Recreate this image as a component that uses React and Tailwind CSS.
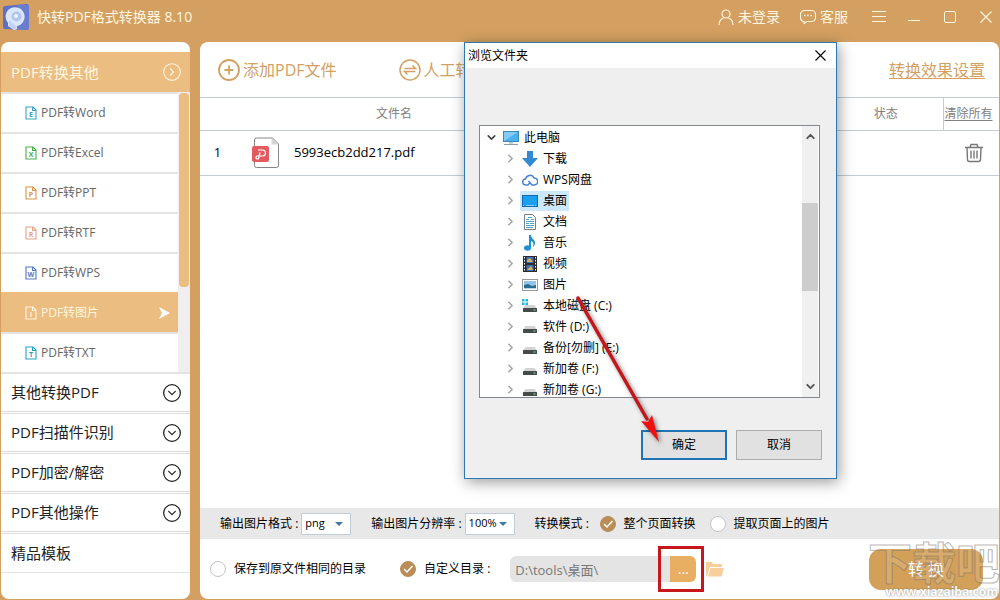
import { useState } from 'react'
import { ChevronDown, ChevronRight, ChevronUp, CircleChevronDown, CircleChevronRight } from 'lucide-react'

const formats = [
  { name: 'PDF转Word', letter: 'E', color: 'text-[#3aa3c4]' },
  { name: 'PDF转Excel', letter: 'X', color: 'text-[#44b04a]' },
  { name: 'PDF转PPT', letter: 'P', color: 'text-[#dc9443]' },
  { name: 'PDF转RTF', letter: 'R', color: 'text-[#e5a283]' },
  { name: 'PDF转WPS', letter: 'W', color: 'text-[#5478bd]' },
  { name: 'PDF转图片', letter: 'I', color: 'text-[#fff4dc]' },
  { name: 'PDF转TXT', letter: 'T', color: 'text-[#22a5c5]' }
]

const groups = ['其他转换PDF', 'PDF扫描件识别', 'PDF加密/解密', 'PDF其他操作']

const folders = [
  { name: '下载', icon: 'download' },
  { name: 'WPS网盘', icon: 'cloud' },
  { name: '桌面', icon: 'desktop' },
  { name: '文档', icon: 'doc' },
  { name: '音乐', icon: 'music' },
  { name: '视频', icon: 'video' },
  { name: '图片', icon: 'picture' },
  { name: '本地磁盘 (C:)', icon: 'system' },
  { name: '软件 (D:)', icon: 'disk' },
  { name: '备份[勿删] (E:)', icon: 'disk' },
  { name: '新加卷 (F:)', icon: 'disk' },
  { name: '新加卷 (G:)', icon: 'disk' }
]

const Logo = () => (
  <svg viewBox="0 0 28 28" className="size-7">
    <path d="M3 3 24 1a2.500 2.500 0 0 1 3 2v22a2 2 0 0 1-2 2L3 26a2 2 0 0 1-2-2V5a2 2 0 0 1 2-2z" fill="#5d6fc6" />
    <path d="M15 2h10a2 2 0 0 1 2 2v21a2 2 0 0 1-2 2H15z" fill="#7286d3" opacity=".6" />
    <path d="M6 20A9.500 9.500 0 1 1 15 23v3l-3 1-6-4z" fill="#dbe7f8" />
    <circle cx="14.500" cy="13.500" r="5" fill="#b3c5eb" />
    <circle cx="14" cy="13" r="2" fill="#eef4fd" />
    <path d="M7 17v6l7 4v-4z" fill="#c3d2f0" />
  </svg>
)

const FileIcon = ({ letter }) => (
  <svg viewBox="0 0 12 14" className="h-[14px] w-3" fill="none" stroke="currentColor" strokeWidth="1.100">
    <path d="M1 1h7l3 3v9H1zM7.500 1v3.500H11" />
    <text x="6" y="11.200" fontSize="7" textAnchor="middle" fill="currentColor" stroke="none" fontWeight="bold">{letter}</text>
  </svg>
)

const PdfIcon = () => (
  <svg viewBox="0 0 28 32" className="h-8 w-7" fill="none">
    <path d="M4.500 1h16l6 6v21.500a2 2 0 0 1-2 2h-20a2 2 0 0 1-2-2V3a2 2 0 0 1 2-2z" fill="#fff" stroke="#858585" />
    <path d="M19.500 1v6.500h7z" fill="#d6d6d6" />
    <rect x="0" y="9" width="17" height="16" rx="2" fill="#e25b60" />
    <path d="M6 13h4.500a3 3 0 0 1 0 6H5a1.500 1.500 0 1 0 1.500 2.500l1.500-6" stroke="#fff" strokeWidth="1.200" />
  </svg>
)

const TreeIcon = ({ kind }) => {
  if (kind === 'download') {
    return (
      <svg viewBox="0 0 16 16" className="size-4">
        <path d="M5 0h6v7h5l-8 9-8-9h5z" fill="#3489d3" />
      </svg>
    )
  }
  if (kind === 'cloud') {
    return (
      <svg viewBox="0 0 16 16" className="size-4" fill="none" stroke="#4b82d6" strokeWidth="1.500">
        <path d="M8 10.500 6 13H4a3 3 0 0 1-.5-6A4.500 4.500 0 0 1 12 6a3.500 3.500 0 0 1 .5 7H10L6.500 9" />
      </svg>
    )
  }
  if (kind === 'desktop') {
    return (
      <svg viewBox="0 0 16 16" className="size-4">
        <rect x="0.500" y="2.500" width="15" height="11" fill="#19a0f0" stroke="#1269ab" />
        <path d="M1 12.500h1M4 12.500h8M13 12.500h1" stroke="#8fd0fa" />
      </svg>
    )
  }
  if (kind === 'doc') {
    return (
      <svg viewBox="0 0 16 16" className="size-4">
        <path d="M2.500.5h8l3 3v12h-11z" fill="#fff" stroke="#7d7d7d" />
        <path d="M4 5.500h3M9 5.500h3M4 7.500h8M4 9.500h3M8 9.500h4M4 11.500h8M4 13.500h7M6 3.500h4" stroke="#4aa0c8" />
      </svg>
    )
  }
  if (kind === 'music') {
    return (
      <svg viewBox="0 0 16 16" className="size-4" fill="#1f92d4">
        <path d="M7 0h2c0 4 4 4 4 8 0 2-1 3-2 4 1-4 0-5-2-6v7H7z" />
        <ellipse cx="5.500" cy="13" rx="3.500" ry="2.800" />
      </svg>
    )
  }
  if (kind === 'video') {
    return (
      <svg viewBox="0 0 16 16" className="size-4">
        <rect x="1" y="0" width="14" height="16" fill="#2c2c2c" />
        <path d="M2.500 1v15M13.500 1v15" stroke="#fff" strokeDasharray="1.500 1.500" />
        <path d="M4.500 1h7v6h-7zM4.500 9h7v6h-7z" fill="#3f6fb8" />
        <path d="M5 4l3-2 3 4H5zM5 14l4-4 2 4z" fill="#d9b24e" />
      </svg>
    )
  }
  if (kind === 'picture') {
    return (
      <svg viewBox="0 0 16 16" className="size-4">
        <rect x="0.500" y="2.500" width="15" height="11" fill="#fff" stroke="#9a9a9a" />
        <path d="M2 4h12v8H2z" fill="#8fc6ea" />
        <path d="M2 8l4-1 4 2 4-1v4H2z" fill="#2b6c8f" />
        <path d="M2 11h12v1H2z" fill="#b9d8e6" />
      </svg>
    )
  }
  return (
    <svg viewBox="0 0 16 16" className="size-4">
      <path d="M3.500 7h9l2.500 3.500H1z" fill="#d3d3d3" />
      <rect x="1" y="10" width="14" height="4" rx="0.500" fill="#454b4b" />
      <rect x="11.500" y="11.500" width="2" height="1" fill="#7fe08c" />
      {kind === 'system' && <path d="M0 1h2.500v2.500H0zM3.500 1H6v2.500H3.500zM0 4.500h2.500V7H0zM3.500 4.500H6V7H3.500z" fill="#1db5dc" />}
    </svg>
  )
}

const ComputerIcon = () => (
  <svg viewBox="0 0 16 16" className="size-4">
    <rect x="0.500" y="1.500" width="15" height="10" fill="#49b1f0" stroke="#3d86b8" />
    <path d="M1 11 15 2H1z" fill="#83cbf5" />
    <path d="M6 12h4v2H6z" fill="#c4ccd2" />
    <path d="M1 14.500h14" stroke="#8d9aa3" />
  </svg>
)

const TitleBar = () => (
  <header className="flex h-[42px] shrink-0 items-center pr-2 pb-2 pl-0.5 text-[#fff6e0]">
    <Logo />
    <h1 className="ml-[7px] text-sm">快转PDF格式转换器 8.10</h1>
    <div className="ml-auto flex items-center text-sm">
      <button className="flex items-center gap-1">
        <svg viewBox="0 0 16 16" className="size-4" fill="none" stroke="currentColor" strokeWidth="1.200">
          <circle cx="8" cy="5" r="4" />
          <path d="M1 16c0-4 2-6 4.500-7M15 16c0-4-2-6-4.500-7" />
        </svg>
        未登录
      </button>
      <button className="ml-5 flex items-center gap-1">
        <svg viewBox="0 0 16 16" className="size-4" fill="none" stroke="currentColor" strokeWidth="1.100">
          <path d="M4.500 1.500h7A4 4 0 0 1 15.500 5.500v3a4 4 0 0 1-4 4H7L4 14.500v-2A4 4 0 0 1 .5 8.500v-3a4 4 0 0 1 4-4z" />
          <path d="M4 6.500h1.500M7.200 6.500h1.500M10.500 6.500H12" strokeWidth="1.500" />
        </svg>
        客服
      </button>
      <button aria-label="菜单" className="ml-6">
        <svg viewBox="0 0 14 14" className="size-[14px]" stroke="currentColor"><path d="M0 1.500h14M0 6.500h14M0 11.500h14" /></svg>
      </button>
      <button aria-label="最小化" className="ml-[22px]">
        <svg viewBox="0 0 12 14" className="h-[14px] w-3" stroke="currentColor"><path d="M0 10.500h12" /></svg>
      </button>
      <button aria-label="最大化" className="ml-6">
        <svg viewBox="0 0 12 12" className="size-3" fill="none" stroke="currentColor"><rect x="0.500" y="0.500" width="11" height="11" rx="1.500" /></svg>
      </button>
      <button aria-label="关闭" className="ml-6">
        <svg viewBox="0 0 12 12" className="size-3" stroke="currentColor" strokeWidth="1.200"><path d="M.5.5l11 11M11.500.5l-11 11" /></svg>
      </button>
    </div>
  </header>
)

const Sidebar = ({ active, onSelect }) => (
  <nav className="w-[189px] shrink-0 overflow-hidden rounded-lg bg-white pt-[10px]">
    <button className="flex h-10 w-full items-center justify-between bg-[#ebbd80] pr-2 pl-[10px] text-[15px] text-[#fff6e0]">
      PDF转换其他
      <CircleChevronRight size={20} strokeWidth={1.3} />
    </button>
    <div className="flex border-b-2 border-[#e3e3e3] bg-[#f0eeee]">
      <ul className="flex-1 bg-white">
        {formats.map((item) => (
          <li key={item.name}>
            <button
              onClick={() => onSelect(item.name)}
              className={`flex h-10 w-full items-center gap-1 border-t-2 pr-2 pl-6 text-xs ${
                active === item.name ? 'border-[#ebbd80] bg-[#ebbd80] text-[#fff6e0]' : 'border-[#e3e3e3] text-[#666]'
              }`}
            >
              <span className={item.color}><FileIcon letter={item.letter} /></span>
              {item.name}
              {active === item.name && (
                <svg viewBox="0 0 11 12" className="ml-auto h-3 w-[11px]" fill="#fff"><path d="M0 0l11 6-11 6 3-6z" /></svg>
              )}
            </button>
          </li>
        ))}
      </ul>
      <div className="w-3 px-px pt-px">
        <div className="h-[194px] rounded-sm bg-[#ebbd80]"></div>
      </div>
    </div>
    {groups.map((name) => (
      <button
        key={name}
        className="flex h-10 w-full items-center justify-between border-b-3 border-double border-[#dedede] pr-2 pl-[10px] text-[15px] text-[#222]"
      >
        {name}
        <CircleChevronDown size={20} strokeWidth={1.5} />
      </button>
    ))}
    <button className="flex h-[39px] w-full items-center border-b border-[#e3e3e3] pl-[10px] text-[15px] text-[#222]">精品模板</button>
  </nav>
)

const Toolbar = () => (
  <div className="flex h-[55px] items-center pr-[14px] pl-[18px] text-base text-[#d3a163]">
    <button className="flex items-center gap-[3px]">
      <svg viewBox="0 0 22 22" className="size-[22px]" fill="none" stroke="currentColor" strokeWidth="1.800">
        <circle cx="11" cy="11" r="10" />
        <path d="M6.500 11h9M11 6.500v9" />
      </svg>
      添加PDF文件
    </button>
    <button className="ml-[62px] flex items-center gap-[3px]">
      <svg viewBox="0 0 22 22" className="size-[22px]" fill="none" stroke="currentColor" strokeWidth="1.500">
        <circle cx="11" cy="11" r="10" />
        <path d="M5.500 9.500h11l-3-3M16.500 12.500h-11l3 3" />
      </svg>
      人工转换
    </button>
    <a href="#settings" className="ml-auto underline underline-offset-2">转换效果设置</a>
  </div>
)

const FileTable = () => (
  <table className="w-full table-fixed border-collapse text-xs">
    <colgroup>
      <col className="w-[35px]" />
      <col className="w-[353px]" />
      <col />
      <col className="w-[114px]" />
      <col className="w-[56px]" />
    </colgroup>
    <thead className="text-[#808080]">
      <tr className="h-[33px] border-y border-[#c3ccd3]">
        <th colSpan="2" className="font-normal">文件名</th>
        <th></th>
        <th className="font-normal">状态</th>
        <th className="border-l border-[#c3ccd3] pl-px text-left font-normal">
          <a href="#clear" className="underline underline-offset-2">清除所有</a>
        </th>
      </tr>
    </thead>
    <tbody>
      <tr className="h-[45px] border-b border-[#c3ccd3] text-[13px] text-black">
        <td className="text-center">1</td>
        <td>
          <div className="flex items-center gap-[14px] pl-[17px]">
            <PdfIcon />
            5993ecb2dd217.pdf
          </div>
        </td>
        <td></td>
        <td></td>
        <td>
          <button aria-label="删除" className="ml-[22px] block">
            <svg viewBox="0 0 18 20" className="h-5 w-[18px]" fill="none" stroke="#777" strokeWidth="1.400">
              <path d="M0 4.500h18M5 4.500l1-3h6l1 3M2 4.500l.5 12a2 2 0 0 0 2 2h9a2 2 0 0 0 2-2l.5-12M6 7.500v8M9 7.500v8M12 7.500v8" />
            </svg>
          </button>
        </td>
      </tr>
    </tbody>
  </table>
)

const Radio = ({ name, label, defaultChecked }) => (
  <label className="flex items-center gap-2">
    <span className="relative size-4">
      <input
        type="radio"
        name={name}
        defaultChecked={defaultChecked}
        className="peer block size-4 appearance-none rounded-full border border-[#c4c4c4] bg-white checked:border-[#b98d55] checked:bg-[#b98d55]"
      />
      <svg viewBox="0 0 16 16" className="pointer-events-none absolute inset-0 hidden size-4 peer-checked:block" fill="none" stroke="#fff" strokeWidth="1.500">
        <path d="M4 8l3 3 5.500-6" />
      </svg>
    </span>
    {label}
  </label>
)

const Select = ({ label, options }) => (
  <label className="flex items-center gap-[3px]">
    {label} :
    <span className="relative">
      <select className="block h-[22px] w-[50px] appearance-none border border-[#c0ccd6] bg-white pl-[3px] text-[11px]">
        {options.map((o) => <option key={o}>{o}</option>)}
      </select>
      <svg viewBox="0 0 8 4" className="pointer-events-none absolute top-[9px] right-2 h-1 w-2" fill="#3c7aa8"><path d="M0 0h8L4 4z" /></svg>
    </span>
  </label>
)

const Options = () => (
  <div className="flex h-[31px] items-center bg-[#e8e8e8] pl-5 text-xs text-black">
    <Select label="输出图片格式" options={['png', 'jpg', 'bmp']} />
    <div className="ml-5">
      <Select label="输出图片分辨率" options={['100%', '150%', '200%']} />
    </div>
    <fieldset className="ml-5 flex items-center">
      <span className="w-[65px]">转换模式 :</span>
      <Radio name="mode" label="整个页面转换" defaultChecked />
      <div className="ml-[14px]">
        <Radio name="mode" label="提取页面上的图片" />
      </div>
    </fieldset>
  </div>
)

const Output = () => (
  <div className="flex h-[60px] items-center pr-4 pl-[10px] text-xs text-black">
    <Radio name="dir" label="保存到原文件相同的目录" />
    <div className="ml-[34px]">
      <Radio name="dir" label="自定义目录 :" defaultChecked />
    </div>
    <input
      aria-label="自定义目录"
      defaultValue="D:\tools\桌面\"
      className="ml-5 h-[26px] w-40 rounded-l-md bg-[#e4e4e4] px-[5px] text-[13px] text-[#777]"
    />
    <div className="relative">
      <button className="block h-[26px] w-[26px] rounded-r-md bg-[#e8ae62] text-sm text-white">...</button>
      <div className="pointer-events-none absolute -inset-y-[10px] -right-2 -left-3 border-3 border-[#c8161d]"></div>
    </div>
    <button aria-label="打开目录" className="ml-[10px]">
      <svg viewBox="0 0 18 16" className="h-4 w-[18px]" fill="#f8cf9a">
        <path d="M0 1h6l1 2h9v3H4L1 15H0z" />
        <path d="M4.500 7H18l-2.500 8.500H2z" />
      </svg>
    </button>
    <button className="ml-auto h-[41px] w-[114px] rounded-xl bg-[#d3a059] text-base text-white">转 换</button>
  </div>
)

const FolderDialog = () => (
  <section
    role="dialog"
    aria-label="浏览文件夹"
    className="absolute top-[42px] left-[464px] w-[373px] border border-[#2c78b4] bg-[#efefef] text-xs text-black shadow-[2px_3px_14px_rgba(0,0,0,0.4)]"
  >
    <div className="flex h-[25px] items-center justify-between bg-white pr-[10px] pl-[3px]">
      浏览文件夹
      <button aria-label="关闭">
        <svg viewBox="0 0 11 11" className="size-[11px]" stroke="#000" strokeWidth="1.100"><path d="M.5.5l10 10M10.500.5l-10 10" /></svg>
      </button>
    </div>
    <div className="mt-[57px] mr-4 ml-[14px] flex h-[273px] overflow-hidden border border-[#828790] bg-white">
      <ul className="flex-1 pt-px">
        <li className="flex h-[21px] items-center gap-[5px] pl-[5px]">
          <ChevronDown size={13} strokeWidth={3} color="#444" />
          <ComputerIcon />
          此电脑
        </li>
        {folders.map((item) => (
          <li key={item.name} className="flex h-[21px] items-center pl-6">
            <ChevronRight size={13} strokeWidth={3} color="#a6a6a6" />
            <span className={`ml-[3px] flex h-5 items-center gap-[5px] px-[2px] ${item.icon === 'desktop' ? 'bg-[#cce8ff]' : ''}`}>
              <TreeIcon kind={item.icon} />
              {item.name}
            </span>
          </li>
        ))}
      </ul>
      <div className="mr-px flex w-4 flex-col items-center bg-[#f0f0f0] py-1">
        <ChevronUp size={13} strokeWidth={3.5} color="#555" />
        <div className="mt-[60px] h-[88px] w-full bg-[#cdcdcd]"></div>
        <ChevronDown size={13} strokeWidth={3.5} color="#555" className="mt-auto" />
      </div>
    </div>
    <div className="flex justify-end gap-[9px] pt-8 pr-[14px] pb-[18px]">
      <button className="h-[30px] w-[86px] border-2 border-[#1f74b5] bg-[#e1e1e1]">确定</button>
      <button className="h-[30px] w-[86px] border border-[#adadad] bg-[#e1e1e1]">取消</button>
    </div>
    <svg viewBox="0 0 90 150" className="pointer-events-none absolute top-[252px] left-[109px] h-[150px] w-[90px] drop-shadow-[2px_2px_2px_rgba(0,0,0,0.5)]">
      <path d="M4 3 73 124" stroke="#c4171c" strokeWidth="3.500" strokeLinecap="round" />
      <path d="M85 147 67 126l7 1 4-7z" fill="#f01010" />
    </svg>
  </section>
)

const Watermark = () => (
  <div className="pointer-events-none absolute right-0 bottom-0 text-right font-bold text-white/15">
    <div className="text-[44px] leading-[44px] [-webkit-text-stroke:1px_rgba(125,115,105,0.55)]">下载吧</div>
    <div className="pr-0.5 pb-px text-xs leading-[14px] text-white [text-shadow:0_0_2px_#777]">www.xiazaiba.com</div>
  </div>
)

const App = () => {
  const [active, setActive] = useState('PDF转图片')

  return (
    <div className="relative flex min-h-screen flex-col overflow-hidden bg-[#d3a061] font-['Open_Sans','Noto_Sans_CJK_SC',sans-serif]">
      <TitleBar />
      <div className="flex flex-1 gap-[10px] px-px pb-px">
        <Sidebar active={active} onSelect={setActive} />
        <main className="flex min-w-0 flex-1 flex-col overflow-hidden rounded-lg bg-white">
          <Toolbar />
          <FileTable />
          <div className="mt-auto">
            <Options />
            <Output />
          </div>
        </main>
      </div>
      <FolderDialog />
      <Watermark />
    </div>
  )
}

export default App
